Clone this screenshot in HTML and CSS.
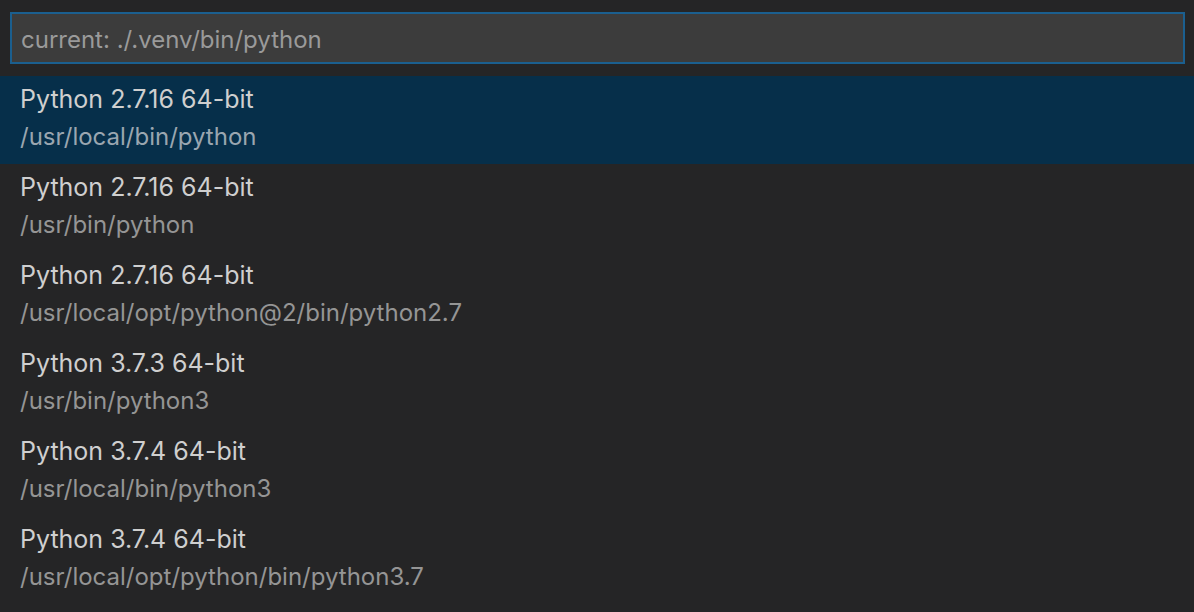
FILE: index.html
```html
<!DOCTYPE html>
<html>
<head>
<meta charset="utf-8">
<link rel="stylesheet" href="styles.css">
</head>
<body>
<div class="quick-pick">
  <div class="input-wrap">
    <div class="input">current: ./.venv/bin/python</div>
  </div>
  <div class="list">
    <div class="row selected"><div class="label">Python 2.7.16 64-bit</div><div class="detail">/usr/local/bin/python</div></div>
    <div class="row"><div class="label">Python 2.7.16 64-bit</div><div class="detail">/usr/bin/python</div></div>
    <div class="row"><div class="label">Python 2.7.16 64-bit</div><div class="detail">/usr/local/opt/python@2/bin/python2.7</div></div>
    <div class="row"><div class="label">Python 3.7.3 64-bit</div><div class="detail">/usr/bin/python3</div></div>
    <div class="row"><div class="label">Python 3.7.4 64-bit</div><div class="detail">/usr/local/bin/python3</div></div>
    <div class="row"><div class="label">Python 3.7.4 64-bit</div><div class="detail">/usr/local/opt/python/bin/python3.7</div></div>
  </div>
</div>
</body>
</html>
```
FILE: styles.css
```css
html, body {
  margin: 0;
  padding: 0;
  background: #252526;
  height: 100%;
}
body {
  font-family: Inter, "Open Sans", sans-serif;
  font-size: 25px;
  overflow: hidden;
}
.quick-pick {
  display: flex;
  flex-direction: column;
}
.input-wrap {
  padding: 12px 9px 12px 10px;
}
.input {
  height: 48px;
  box-sizing: content-box;
  background: #3c3c3c;
  border: 2px solid #1b5f8f;
  color: #9a9a9a;
  font-size: 24px;
  line-height: 52px;
  padding-left: 9px;
  overflow: hidden;
}
.list {
  display: flex;
  flex-direction: column;
}
.row {
  height: 88px;
  box-sizing: border-box;
  padding: 4px 0 0 20px;
}
.row.selected {
  background: #062f4a;
}
.label {
  color: #cfcfcf;
  line-height: 38px;
}
.detail {
  color: #959595;
  font-size: 24px;
  line-height: 38px;
}
.selected .detail {
  color: #9aa6b0;
}
```
